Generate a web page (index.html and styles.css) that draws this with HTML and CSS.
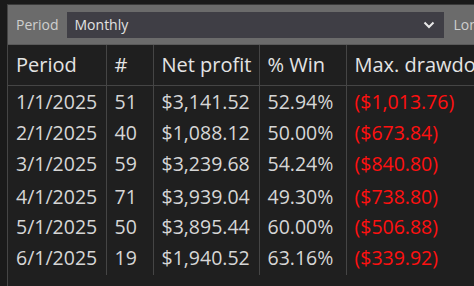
FILE: index.html
```html
<!DOCTYPE html>
<html>
<head>
<meta charset="utf-8">
<link rel="stylesheet" href="styles.css">
</head>
<body>
<div class="panel">
  <div class="toolbar">
    <span class="label">Period</span>
    <div class="select">
      <span>Monthly</span>
      <svg class="chev" width="12" height="8" viewBox="0 0 12 8"><path d="M1.5 1.5 L6 6 L10.5 1.5" fill="none" stroke="#e8e8e8" stroke-width="2"/></svg>
    </div>
    <span class="label">Long</span>
  </div>
  <table class="grid">
    <colgroup>
      <col class="c1"><col class="c2"><col class="c3"><col class="c4"><col class="c5">
    </colgroup>
    <thead>
      <tr><th>Period</th><th>#</th><th>Net profit</th><th>% Win</th><th>Max. drawdown</th></tr>
    </thead>
    <tbody>
      <tr><td>1/1/2025</td><td>51</td><td>$3,141.52</td><td>52.94%</td><td class="neg">($1,013.76)</td></tr>
      <tr><td>2/1/2025</td><td>40</td><td>$1,088.12</td><td>50.00%</td><td class="neg">($673.84)</td></tr>
      <tr><td>3/1/2025</td><td>59</td><td>$3,239.68</td><td>54.24%</td><td class="neg">($840.80)</td></tr>
      <tr class="tall"><td>4/1/2025</td><td>71</td><td>$3,939.04</td><td>49.30%</td><td class="neg">($738.80)</td></tr>
      <tr><td>5/1/2025</td><td>50</td><td>$3,895.44</td><td>60.00%</td><td class="neg">($506.88)</td></tr>
      <tr class="last"><td>6/1/2025</td><td>19</td><td>$1,940.52</td><td>63.16%</td><td class="neg">($339.92)</td></tr>
    </tbody>
  </table>
</div>
</body>
</html>
```
FILE: styles.css
```css
html, body {
  margin: 0;
  padding: 0;
  background: #1a1a1a;
  overflow: hidden;
  height: 100%;
}
body {
  font-family: "Open Sans", "Noto Sans", sans-serif;
}
.panel {
  margin: 4px 0 0 7px;
  width: 600px;
  height: 282px;
  background: #1f1f1f;
  border-left: 1px solid #454545;
  border-top: 1px solid #3a3a3a;
}
.toolbar {
  height: 40px;
  background: #6b6b6b;
  display: flex;
  align-items: center;
  padding-left: 8px;
  gap: 8px;
  border-bottom: 1px solid #5a5a5a;
  box-sizing: border-box;
}
.label {
  color: #cfcfcf;
  font-size: 14px;
}
.select {
  width: 377px;
  height: 26px;
  background: #3f3e45;
  display: flex;
  align-items: center;
  justify-content: space-between;
  padding: 0 9px 0 8px;
  box-sizing: border-box;
  color: #e2e2e2;
  font-size: 14px;
  margin-right: 2px;
}
.chev {
  display: block;
}
.grid {
  border-collapse: collapse;
  table-layout: fixed;
  width: 600px;
  color: #d6d6d6;
  font-size: 19.5px;
}
.c1 { width: 98px; }
.c2 { width: 47px; }
.c3 { width: 106px; }
.c4 { width: 87px; }
.c5 { width: 262px; }
.grid th {
  height: 40px;
  font-weight: normal;
  text-align: left;
  color: #e4e4e4;
  font-size: 20px;
  padding: 0 0 0 8px;
  border-right: 1px solid #454545;
  border-bottom: 1px solid #454545;
  white-space: nowrap;
  overflow: hidden;
  box-sizing: border-box;
}
.grid td {
  height: 31px;
  padding: 0 0 0 8px;
  border-right: 1px solid #454545;
  white-space: nowrap;
  box-sizing: border-box;
}
.grid tbody tr:first-child td {
  height: 32px;
  padding-top: 1px;
}
.grid tr.tall td {
  height: 32px;
  padding-top: 2px;
}
.grid tr.last td {
  height: 33px;
  padding-bottom: 2px;
}
.grid th:last-child, .grid td:last-child {
  border-right: none;
}
.grid .neg {
  color: #ff1010;
}
```
